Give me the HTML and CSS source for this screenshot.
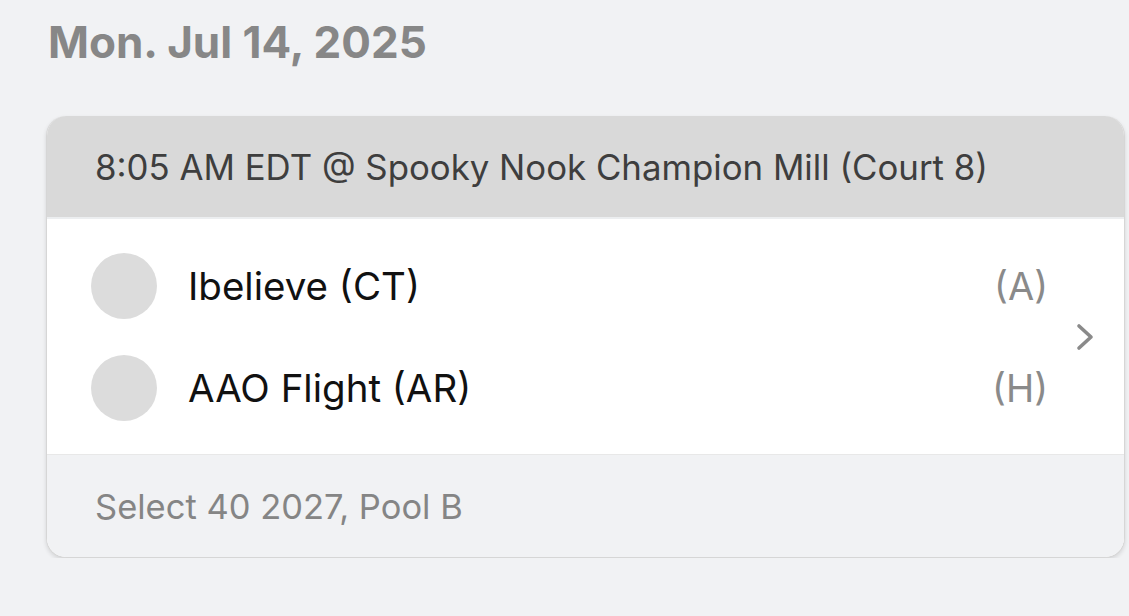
FILE: index.html
```html
<!DOCTYPE html>
<html>
<head>
<meta charset="utf-8">
<link rel="stylesheet" href="styles.css">
</head>
<body>
<div class="page">
  <h1 class="date">Mon. Jul 14, 2025</h1>
  <div class="card">
    <div class="card-head">8:05 AM EDT @ Spooky Nook Champion Mill (Court 8)</div>
    <div class="card-body">
      <div class="teams">
        <div class="team">
          <span class="avatar"></span>
          <span class="name">Ibelieve (CT)</span>
          <span class="side">(A)</span>
        </div>
        <div class="team">
          <span class="avatar"></span>
          <span class="name">AAO Flight (AR)</span>
          <span class="side">(H)</span>
        </div>
      </div>
      <svg class="chev" viewBox="0 0 20 30" width="20" height="30"><path d="M3 4 L15 15 L3 26" fill="none" stroke="#8a8a8a" stroke-width="3.6" stroke-linecap="round" stroke-linejoin="round"/></svg>
    </div>
    <div class="card-foot">Select 40 2027, Pool B</div>
  </div>
</div>
</body>
</html>
```
FILE: styles.css
```css
html, body {
  margin: 0;
  padding: 0;
  background: #f1f2f4;
}
body {
  font-family: Inter, "Open Sans", sans-serif;
}
.page {
  padding: 14px 4px 0 46px;
}
.date {
  margin: 0 0 0 2px;
  font-size: 44px;
  font-weight: 700;
  color: #878787;
  line-height: 56px;
  letter-spacing: 0;
}
.card {
  margin-top: 46px;
  width: 1077px;
  border-radius: 20px;
  overflow: hidden;
  background: #fff;
  border: 1px solid #d6d6d6;
  border-top: none;
  box-shadow: 0 2px 4px rgba(0,0,0,0.12);
}
.card-head {
  background: #d9d9d9;
  height: 101px;
  display: flex;
  align-items: center;
  padding-left: 48px;
  font-size: 34.8px;
  color: #3e3e3e;
  border-bottom: 2px solid #eceef0;
}
.card-body {
  height: 235px;
  display: flex;
  align-items: center;
  background: #fff;
}
.teams {
  flex: 1;
  display: flex;
  flex-direction: column;
  gap: 36px;
  padding-left: 44px;
  padding-right: 28px;
}
.team {
  display: flex;
  align-items: center;
  height: 66px;
}
.avatar {
  width: 66px;
  height: 66px;
  border-radius: 50%;
  background: #dcdcdc;
  flex: none;
}
.name {
  margin-left: 31px;
  font-size: 38.5px;
  color: #111;
  flex: 1;
}
.side {
  font-size: 38px;
  color: #8a8a8a;
}
.chev {
  margin-right: 28px;
}
.card-foot {
  background: #f1f2f4;
  height: 102px;
  display: flex;
  align-items: center;
  padding-left: 48px;
  font-size: 34.5px;
  color: #858585;
  border-top: 1px solid #e8e8e8;
}
```
